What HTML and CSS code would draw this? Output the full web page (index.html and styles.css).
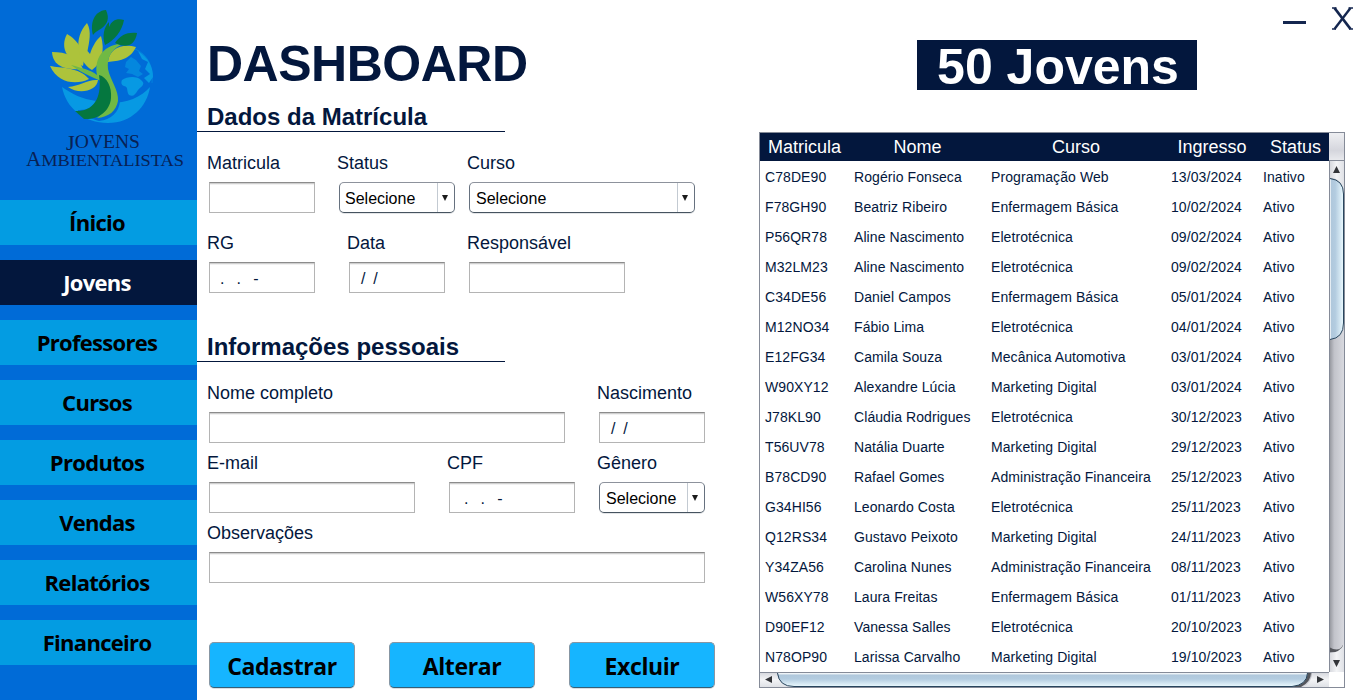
FILE: index.html
```html
<!DOCTYPE html>
<html lang="pt-BR">
<head>
<meta charset="utf-8">
<title>Jovens Ambientalistas</title>
<link rel="stylesheet" href="styles.css">
</head>
<body>
<div class="app">
  <aside class="sidebar">
    <svg class="logo" viewBox="0 0 197 200" width="197" height="200">
      <g fill="#0799e3">
        <path d="M62 87C72 94 82 99 96 101L106 103C124 104 141 98 150 87C147 107 131 123 108 123C84 123 66 108 62 87Z"/>
        <path d="M122 80C127 76 138 76 141 80C146 84 142 86 138 90C135 95 133 97 129 95C126 91 129 87 124 86C121 85 121 82 122 80Z"/>
        <path d="M138 51C148 57 153 67 153 77L149 83L144 78L150 74L145 69L148 62L142 59Z"/>
        <path opacity=".6" d="M126 62L131 57L136 60L141 66L139 71L143 74L138 77L132 74L126 73L129 69L125 67Z"/>
      </g>
      <path d="M135 49C147 54 154 66 152 83" fill="none" stroke="#0799e3" stroke-width=".8" opacity=".6"/>
      <path d="M97 74C94 60 103 47 118 44L121 45C109 51 106 60 109 72C112 81 119 90 118 101C117 111 110 118 99 119L78 112C98 113 106 93 97 74Z" fill="#006bd7" stroke="#006bd7" stroke-width="4"/>
      <g fill="#adc33b">
        <path d="M50 66C61 68 79 67 89 79C77 85 58 84 50 66Z"/>
        <path d="M52 52C66 52 78 56 83 69C68 70 53 68 52 52Z"/>
        <path d="M67 34C78 40 86 53 83 66C66 60 60 47 67 34Z"/>
        <path d="M87 23C92 31 89 43 87.500 51L90 54C92 48 95 41 101 36C105 50 102 63 92 70C77 61 73 38 87 23Z"/>
        <path d="M108 62C109 48 123 43 136 47C130 60 118 61 108 62Z"/>
        <path d="M68 87C80 86 88 79 98 80C97 91 79 95 68 87Z"/>
      </g>
      <path d="M71 65C82 68 91 70 97 75C94 58 103 47 118 44L121 45C110 50 107 59 108 69C110 80 119 90 118 101C116 111 109 117 97 118C110 108 113 95 105 83C98 79 84 75 71 65Z" fill="#70b944"/>
      <g fill="#05773f">
        <path d="M93 35C90 23 94 11 106 10C110 19 107 24 102 28C98 31 96 31 93 35Z"/>
        <path d="M105 45C102 36 104 27 109 22L109 27C112 20 117 18 124 20C122 31 115 40 105 45Z"/>
        <path d="M115 43C121 34 128 32 137 33C135 45 127 49 115 43Z"/>
        <path d="M99 75C107 77 112 87 111 98C110 112 97 120 84 119L75 111C90 112 103 102 99 75Z"/>
      </g>
      <g class="logo-text">
        <text x="66" y="148" font-size="19" textLength="74" lengthAdjust="spacingAndGlyphs"><tspan font-size="22" dy="2">J</tspan><tspan dy="-2">OVENS</tspan></text>
        <text x="26" y="166" font-size="17.500" textLength="158" lengthAdjust="spacingAndGlyphs"><tspan font-size="20">A</tspan>MBIENTALISTAS</text>
      </g>
    </svg>
    <nav class="nav">
      <a class="nav-item">Ínicio</a>
      <a class="nav-item active">Jovens</a>
      <a class="nav-item">Professores</a>
      <a class="nav-item">Cursos</a>
      <a class="nav-item">Produtos</a>
      <a class="nav-item">Vendas</a>
      <a class="nav-item">Relatórios</a>
      <a class="nav-item">Financeiro</a>
    </nav>
  </aside>

  <main class="form">
    <h1 class="title">DASHBOARD</h1>
    <h2 class="section">Dados da Matrícula</h2>
    <div class="row">
      <div class="field w106"><span class="label">Matricula</span><div class="input"></div></div>
      <div class="field w116 gap24"><span class="label">Status</span><div class="select"><span class="value">Selecione</span><span class="arrow"></span></div></div>
      <div class="field w226 gap14"><span class="label">Curso</span><div class="select"><span class="value">Selecione</span><span class="arrow"></span></div></div>
    </div>
    <div class="row row-spaced">
      <div class="field w106"><span class="label">RG</span><div class="input mask-doc">.   .   -</div></div>
      <div class="field w96 gap34"><span class="label">Data</span><div class="input mask-date">/  /</div></div>
      <div class="field w156 gap24"><span class="label">Responsável</span><div class="input"></div></div>
    </div>
    <h2 class="section section-personal">Informações pessoais</h2>
    <div class="row">
      <div class="field w356"><span class="label">Nome completo</span><div class="input"></div></div>
      <div class="field w106 gap34"><span class="label">Nascimento</span><div class="input mask-date">/  /</div></div>
    </div>
    <div class="row row-tight">
      <div class="field w206"><span class="label">E-mail</span><div class="input"></div></div>
      <div class="field w126 gap34"><span class="label">CPF</span><div class="input mask-cpf">.   .   -</div></div>
      <div class="field w106 gap24"><span class="label">Gênero</span><div class="select"><span class="value">Selecione</span><span class="arrow"></span></div></div>
    </div>
    <div class="row row-tight">
      <div class="field w496"><span class="label">Observações</span><div class="input"></div></div>
    </div>
    <div class="actions">
      <div class="button">Cadastrar</div>
      <div class="button">Alterar</div>
      <div class="button">Excluir</div>
    </div>
  </main>

  <section class="panel">
    <div class="window-controls">
      <svg width="23" height="30" viewBox="0 0 23 30"><path d="M0 21.500H23" stroke="#14264f" stroke-width="3"/></svg>
      <svg width="21" height="30" viewBox="0 0 21 30"><g fill="none" stroke="#14264f"><path d="M2.500 7L18.500 28" stroke-width="2.800"/><path d="M18.500 7L2.500 28" stroke-width="2.400"/><path d="M0 7H4.500M16.500 7H21M0 28H4M17 28H21" stroke-width="1.400"/></g></svg>
    </div>
    <div class="counter">50 Jovens</div>
    <div class="table-box">
      <div class="viewport">
        <table class="table">
          <colgroup><col class="c1"><col class="c2"><col class="c3"><col class="c4"><col class="c5"></colgroup>
          <thead><tr><th>Matricula</th><th>Nome</th><th>Curso</th><th>Ingresso</th><th>Status</th></tr></thead>
          <tbody>
            <tr><td>C78DE90</td><td>Rogério Fonseca</td><td>Programação Web</td><td>13/03/2024</td><td>Inativo</td></tr>
            <tr><td>F78GH90</td><td>Beatriz Ribeiro</td><td>Enfermagem Básica</td><td>10/02/2024</td><td>Ativo</td></tr>
            <tr><td>P56QR78</td><td>Aline Nascimento</td><td>Eletrotécnica</td><td>09/02/2024</td><td>Ativo</td></tr>
            <tr><td>M32LM23</td><td>Aline Nascimento</td><td>Eletrotécnica</td><td>09/02/2024</td><td>Ativo</td></tr>
            <tr><td>C34DE56</td><td>Daniel Campos</td><td>Enfermagem Básica</td><td>05/01/2024</td><td>Ativo</td></tr>
            <tr><td>M12NO34</td><td>Fábio Lima</td><td>Eletrotécnica</td><td>04/01/2024</td><td>Ativo</td></tr>
            <tr><td>E12FG34</td><td>Camila Souza</td><td>Mecânica Automotiva</td><td>03/01/2024</td><td>Ativo</td></tr>
            <tr><td>W90XY12</td><td>Alexandre Lúcia</td><td>Marketing Digital</td><td>03/01/2024</td><td>Ativo</td></tr>
            <tr><td>J78KL90</td><td>Cláudia Rodrigues</td><td>Eletrotécnica</td><td>30/12/2023</td><td>Ativo</td></tr>
            <tr><td>T56UV78</td><td>Natália Duarte</td><td>Marketing Digital</td><td>29/12/2023</td><td>Ativo</td></tr>
            <tr><td>B78CD90</td><td>Rafael Gomes</td><td>Administração Financeira</td><td>25/12/2023</td><td>Ativo</td></tr>
            <tr><td>G34HI56</td><td>Leonardo Costa</td><td>Eletrotécnica</td><td>25/11/2023</td><td>Ativo</td></tr>
            <tr><td>Q12RS34</td><td>Gustavo Peixoto</td><td>Marketing Digital</td><td>24/11/2023</td><td>Ativo</td></tr>
            <tr><td>Y34ZA56</td><td>Carolina Nunes</td><td>Administração Financeira</td><td>08/11/2023</td><td>Ativo</td></tr>
            <tr><td>W56XY78</td><td>Laura Freitas</td><td>Enfermagem Básica</td><td>01/11/2023</td><td>Ativo</td></tr>
            <tr><td>D90EF12</td><td>Vanessa Salles</td><td>Eletrotécnica</td><td>20/10/2023</td><td>Ativo</td></tr>
            <tr><td>N78OP90</td><td>Larissa Carvalho</td><td>Marketing Digital</td><td>19/10/2023</td><td>Ativo</td></tr>
          </tbody>
        </table>
      </div>
      <div class="vscroll">
        <div class="corner"></div>
        <svg width="15" height="511" viewBox="0 0 15 511">
          <defs>
            <linearGradient id="vt"><stop offset="0" stop-color="#8f9198"/><stop offset=".35" stop-color="#c2c3ca"/><stop offset="1" stop-color="#d8d9df"/></linearGradient>
            <linearGradient id="vb"><stop offset="0" stop-color="#d3d5db"/><stop offset=".5" stop-color="#f3f4f6"/><stop offset="1" stop-color="#dfe1e6"/></linearGradient>
            <linearGradient id="vh"><stop offset="0" stop-color="#e7f0f8"/><stop offset=".1" stop-color="#fff"/><stop offset=".2" stop-color="#b0c8dc"/><stop offset=".45" stop-color="#b3cce0"/><stop offset="1" stop-color="#ebfaff"/></linearGradient>
          </defs>
          <path fill="url(#vt)" d="M0 0H15V511H0Z"/>
          <path fill="url(#vb)" d="M0 0H15V30Q13 17 0 17Z"/>
          <path fill="#54565c" d="M0 486Q10 492 14 484V491H0Z"/>
          <path fill="url(#vb)" d="M0 492Q11 492 15 483V511H0Z"/>
          <path fill="url(#vh)" stroke="#29465e" d="M-.5 17.500H1Q14.500 19 14.500 33V162Q14.500 177 1 178.500H-.5Z"/>
          <path fill="#333539" d="M4 12H11L7.500 5ZM4 499H11L7.500 506Z"/>
          <path stroke="#858b98" d="M.5 0V511"/>
        </svg>
      </div>
      <svg class="hscroll" width="569" height="15" viewBox="0 0 569 15">
        <defs>
          <linearGradient id="ht" x2="0" y2="1"><stop offset="0" stop-color="#8f9198"/><stop offset=".35" stop-color="#c2c3ca"/><stop offset="1" stop-color="#d8d9df"/></linearGradient>
          <linearGradient id="hb" x2="0" y2="1"><stop offset="0" stop-color="#d3d5db"/><stop offset=".5" stop-color="#f3f4f6"/><stop offset="1" stop-color="#dfe1e6"/></linearGradient>
          <linearGradient id="hh" x2="0" y2="1"><stop offset="0" stop-color="#e7f0f8"/><stop offset=".1" stop-color="#fff"/><stop offset=".25" stop-color="#b0c8dc"/><stop offset=".5" stop-color="#b3cce0"/><stop offset="1" stop-color="#ebfaff"/></linearGradient>
        </defs>
        <path fill="url(#ht)" d="M0 0H569V15H0Z"/>
        <path fill="url(#hb)" d="M0 0H17Q18 13 32 15H0Z"/>
        <path fill="#54565c" d="M544 0H551Q551 10 541 15H530Z"/>
        <path fill="url(#hb)" d="M552 0H569V15H543Q552 11 552 0Z"/>
        <path fill="url(#hh)" stroke="#29465e" d="M17.500 -.5V1Q19 14.500 34 14.500H532Q547 13 547.500 1V-.5Z"/>
        <path fill="#333539" d="M12 4V11L5 7.500ZM557 4V11L564 7.500Z"/>
        <path stroke="#858b98" d="M0 .5H569"/>
      </svg>
    </div>
  </section>
</div>
</body>
</html>
```
FILE: styles.css
```css
* { box-sizing: border-box; }
body {
  margin: 0;
  background: #fff;
  color: #03173d;
  font-family: "Liberation Sans", Arial, sans-serif;
  overflow: hidden;
}
.app { display: flex; width: 1353px; height: 700px; }

.sidebar { width: 197px; flex: none; background: #006bd7; }
.logo { display: block; }
.logo-text {
  font-family: "Liberation Serif", serif;
  fill: #082154;
}
.nav { display: flex; flex-direction: column; gap: 15px; }
.nav-item {
  height: 45px;
  text-align: center;
  padding-right: 3px;
  background: #039ce2;
  color: #000;
  font: 700 22px/44px "Open Sans", "Noto Sans", sans-serif;
  letter-spacing: -.7px;
}
.nav-item.active { background: #03173d; color: #fff; }

.form { width: 562px; flex: none; padding-top: 34px; }
.title { margin: 0 0 8px 10px; font-size: 50px; line-height: 60px; height: 60px; letter-spacing: -.5px; }
.section {
  width: 308px;
  height: 30px;
  margin: 0 0 16px;
  padding-left: 10px;
  border-bottom: 1px solid #03173d;
  font-size: 24px;
  line-height: 29px;
}
.section-personal { margin-top: 39px; }
.row { display: flex; padding-left: 12px; }
.row-spaced { margin-top: 15px; }
.row-tight { margin-top: 5px; }
.field { flex: none; }
.label {
  display: block;
  height: 30px;
  margin: 0 0 4px -2px;
  font-size: 18px;
  line-height: 30px;
  white-space: nowrap;
}
.input {
  height: 31px;
  border: 1px solid #b4b4b4;
  border-top-color: #8c8c8c;
  box-shadow: inset 0 1px #cfcfcf, inset 0 2px #f1f1f1;
  font-size: 16px;
  line-height: 31px;
  white-space: pre;
}
.mask-doc { padding-left: 10px; word-spacing: -.4px; }
.mask-cpf { padding-left: 14px; word-spacing: -.4px; }
.mask-date { padding-left: 11px; word-spacing: -.5px; }
.select {
  display: flex;
  height: 31px;
  border: 1px solid #66717f;
  border-top-color: #8d929c;
  border-bottom-color: #46535f;
  border-radius: 5px;
  box-shadow: 0 1px #e3e5e7;
  color: #000;
  font-size: 16px;
  line-height: 31px;
}
.value { flex: 1; padding-left: 6px; }
.w116 .value { padding-left: 5px; }
.arrow {
  width: 17px;
  padding-right: 2px;
  display: flex;
  justify-content: center;
  border-left: 1px solid #c3cad2;
}
.arrow::before {
  content: "";
  margin-top: 12px;
  height: 0;
  border: 3.5px solid transparent;
  border-top: 6px solid #1b1b1b;
  border-bottom: 0;
}
.w96 { width: 96px; }
.w106 { width: 106px; }
.w116 { width: 116px; }
.w126 { width: 126px; }
.w156 { width: 156px; }
.w206 { width: 206px; }
.w226 { width: 226px; }
.w356 { width: 356px; }
.w496 { width: 496px; }
.gap14 { margin-left: 14px; }
.gap24 { margin-left: 24px; }
.gap34 { margin-left: 34px; }
.actions { display: flex; gap: 34px; margin: 59px 0 0 12px; }
.button {
  width: 146px;
  height: 46px;
  border: 1px solid #8796a3;
  border-bottom-color: #345f78;
  border-radius: 5px;
  box-shadow: 0 1px #d9dfe3;
  background: #16b5ff;
  color: #000;
  text-align: center;
  font: 700 23px/47px "Open Sans", "Noto Sans", sans-serif;
  letter-spacing: -.4px;
}

.panel { flex: 1; min-width: 0; }
.window-controls { display: flex; justify-content: flex-end; gap: 26px; height: 40px; padding-top: 1px; }
.counter {
  width: 280px;
  height: 50px;
  margin: 0 0 42px 158px;
  padding-left: 2px;
  background: #03173d;
  color: #fff;
  text-align: center;
  font-weight: 700;
  font-size: 50px;
  line-height: 54px;
  white-space: nowrap;
}
.table-box {
  display: grid;
  grid-template: 539px 15px / 569px 15px;
  width: 586px;
  height: 556px;
  border: 1px solid #858b98;
}
.viewport { overflow: hidden; }
.table { width: 573px; table-layout: fixed; border-collapse: collapse; }
.c1 { width: 89px; }
.c2 { width: 137px; }
.c3 { width: 180px; }
.c4 { width: 92px; }
.c5 { width: 75px; }
th { height: 28px; padding: 1px 0 0; background: #03173d; color: #fff; font-size: 18px; font-weight: 400; line-height: 27px; }
td { height: 30px; padding: 2px 0 0 5px; font-size: 14px; line-height: 28px; letter-spacing: .08px; white-space: nowrap; }
.vscroll { display: flex; flex-direction: column; }
.vscroll svg { flex: none; }
.corner { height: 28px; flex: none; background: linear-gradient(#eeeff2, #d5d6dd 65%, #e8e9ed); border-bottom: 1px solid #858b98; }
.hscroll { display: block; }
```
